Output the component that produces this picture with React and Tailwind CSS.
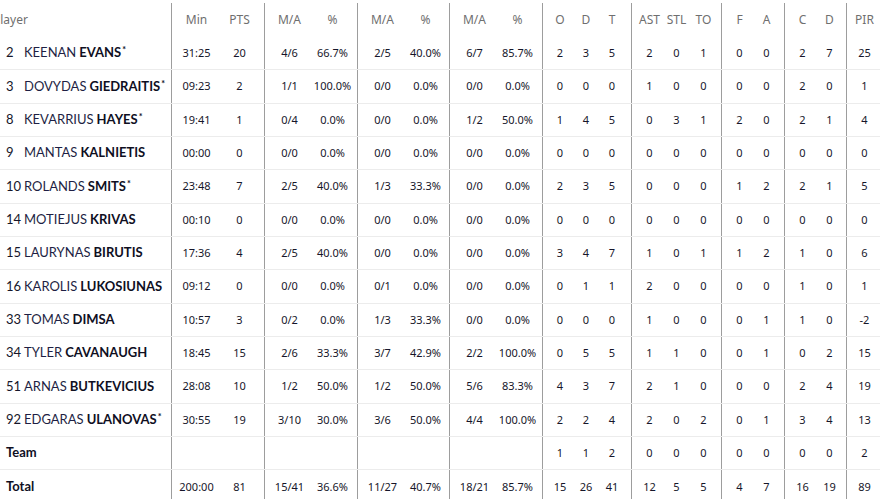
import React from "react";

const players = [
  ["2", "KEENAN", "EVANS", true, "31:25", "20", "4/6", "66.7%", "2/5", "40.0%", "6/7", "85.7%", "2", "3", "5", "2", "0", "1", "0", "0", "2", "7", "25"],
  ["3", "DOVYDAS", "GIEDRAITIS", true, "09:23", "2", "1/1", "100.0%", "0/0", "0.0%", "0/0", "0.0%", "0", "0", "0", "1", "0", "0", "0", "0", "2", "0", "1"],
  ["8", "KEVARRIUS", "HAYES", true, "19:41", "1", "0/4", "0.0%", "0/0", "0.0%", "1/2", "50.0%", "1", "4", "5", "0", "3", "1", "2", "0", "2", "1", "4"],
  ["9", "MANTAS", "KALNIETIS", false, "00:00", "0", "0/0", "0.0%", "0/0", "0.0%", "0/0", "0.0%", "0", "0", "0", "0", "0", "0", "0", "0", "0", "0", "0"],
  ["10", "ROLANDS", "SMITS", true, "23:48", "7", "2/5", "40.0%", "1/3", "33.3%", "0/0", "0.0%", "2", "3", "5", "0", "0", "0", "1", "2", "2", "1", "5"],
  ["14", "MOTIEJUS", "KRIVAS", false, "00:10", "0", "0/0", "0.0%", "0/0", "0.0%", "0/0", "0.0%", "0", "0", "0", "0", "0", "0", "0", "0", "0", "0", "0"],
  ["15", "LAURYNAS", "BIRUTIS", false, "17:36", "4", "2/5", "40.0%", "0/0", "0.0%", "0/0", "0.0%", "3", "4", "7", "1", "0", "1", "1", "2", "1", "0", "6"],
  ["16", "KAROLIS", "LUKOSIUNAS", false, "09:12", "0", "0/0", "0.0%", "0/1", "0.0%", "0/0", "0.0%", "0", "1", "1", "2", "0", "0", "0", "0", "1", "0", "1"],
  ["33", "TOMAS", "DIMSA", false, "10:57", "3", "0/2", "0.0%", "1/3", "33.3%", "0/0", "0.0%", "0", "0", "0", "1", "0", "0", "0", "1", "1", "0", "-2"],
  ["34", "TYLER", "CAVANAUGH", false, "18:45", "15", "2/6", "33.3%", "3/7", "42.9%", "2/2", "100.0%", "0", "5", "5", "1", "1", "0", "0", "1", "0", "2", "15"],
  ["51", "ARNAS", "BUTKEVICIUS", false, "28:08", "10", "1/2", "50.0%", "1/2", "50.0%", "5/6", "83.3%", "4", "3", "7", "2", "1", "0", "0", "0", "2", "4", "19"],
  ["92", "EDGARAS", "ULANOVAS", true, "30:55", "19", "3/10", "30.0%", "3/6", "50.0%", "4/4", "100.0%", "2", "2", "4", "2", "0", "2", "0", "1", "3", "4", "13"],
];

const team = ["", "", "", "", "", "", "", "", "1", "1", "2", "0", "0", "0", "0", "0", "0", "0", "2"];
const total = ["200:00", "81", "15/41", "36.6%", "11/27", "40.7%", "18/21", "85.7%", "15", "26", "41", "12", "5", "5", "4", "7", "16", "19", "89"];
const heads = ["Min", "PTS", "M/A", "%", "M/A", "%", "M/A", "%", "O", "D", "T", "AST", "STL", "TO", "F", "A", "C", "D", "PIR"];

// grupos de columnas: [ancho, padding, cantidad, ancho celda]
const groups = [
  { w: "w-[93px]", pad: "pl-[3px]", n: 2, cell: "w-[43px]" },
  { w: "w-[93px]", pad: "pl-[3px]", n: 2, cell: "w-[43px]" },
  { w: "w-[92px]", pad: "pl-[3px]", n: 2, cell: "w-[43px]" },
  { w: "w-[93px]", pad: "pl-[3px]", n: 2, cell: "w-[43px]" },
  { w: "w-[89px]", pad: "pl-[4px]", n: 3, cell: "w-[26px]" },
  { w: "w-[90px]", pad: "pl-[4px]", n: 3, cell: "w-[27px]" },
  { w: "w-[63px]", pad: "pl-[4px]", n: 2, cell: "w-[27px]" },
  { w: "w-[62px]", pad: "pl-[4px]", n: 2, cell: "w-[27px]" },
  { w: "w-[40px]", pad: "pl-[4px]", n: 1, cell: "w-[27px]" },
];

const Cells = ({ values, textCls }) => {
  let i = 0;
  return groups.map((g, gi) => {
    const chunk = values.slice(i, i + g.n);
    i += g.n;
    return (
      <div key={gi} className={`${g.w} ${g.pad} shrink-0 h-full flex items-center border-l border-[#9d9d9d]`}>
        {chunk.map((v, ci) => (
          <div key={ci} className={`${g.cell} shrink-0 text-center whitespace-nowrap ${textCls}`}>
            {v}
          </div>
        ))}
      </div>
    );
  });
};

const numCls = "text-[11px] text-[#16162a]";

export default function App() {
  return (
    <div className="w-[880px] h-[499px] overflow-hidden bg-white pt-[3px]" style={{ fontFamily: "'Noto Sans', 'Open Sans', sans-serif" }}>
      {/* CABECERA */}
      <div className="flex h-[34px] w-[1000px]">
        <div className="w-[171px] shrink-0 pl-[6px] flex items-center">
          <span className="-ml-[13px] text-[12px] text-[#6f6f6f]">Player</span>
        </div>
        <Cells values={heads} textCls="text-[12px] text-[#6f6f6f]" />
      </div>

      {/* JUGADORES */}
      {players.map((p) => (
        <div key={p[0]} className="flex h-[33.33px] w-[1000px] border-b border-[#ececec]">
          <div className="w-[171px] shrink-0 pl-[6px] flex items-center whitespace-nowrap text-[13px] text-[#1e1f44]" style={{ fontFamily: "Lato, sans-serif" }}>
            <span className="inline-block w-[18px] text-[#16162a]">{p[0]}</span>
            <span>{p[1]}</span>
            <span className="ml-[3px] font-bold text-[#0f0f1f]">{p[2]}</span>
            {p[3] && <span className="text-[9px] font-bold -mt-[6px] ml-[1px] text-[#0f0f1f]">*</span>}
          </div>
          <Cells values={p.slice(4)} textCls={numCls} />
        </div>
      ))}

      {/* TEAM */}
      <div className="flex h-[33.33px] w-[1000px] border-b border-[#ececec]">
        <div className="w-[171px] shrink-0 pl-[6px] flex items-center text-[13px] font-bold text-[#0f0f1f]" style={{ fontFamily: "Lato, sans-serif" }}>
          Team
        </div>
        <Cells values={team} textCls={numCls} />
      </div>

      {/* TOTAL */}
      <div className="flex h-[33.33px] w-[1000px]">
        <div className="w-[171px] shrink-0 pl-[6px] flex items-center text-[13px] font-bold text-[#0f0f1f]" style={{ fontFamily: "Lato, sans-serif" }}>
          Total
        </div>
        <Cells values={total} textCls={numCls} />
      </div>
    </div>
  );
}
